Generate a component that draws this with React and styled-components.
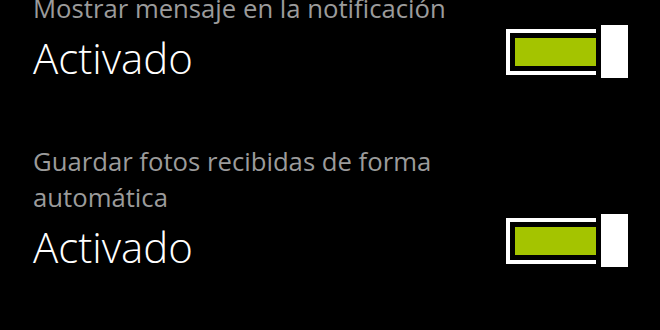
import React from 'react'
import styled, { createGlobalStyle } from 'styled-components'

const GlobalStyle = createGlobalStyle`
	html, body {
		margin: 0;
		padding: 0;
		background: #000;
		overflow: hidden;
	}
`

const Page = styled.div`
	width: 660px;
	height: 330px;
	background: #000;
	box-sizing: border-box;
	padding: 0 32px 0 33px;
	font-family: "Open Sans", "Noto Sans", sans-serif;
	display: flex;
	flex-direction: column;
	margin-top: -9px;
`

const Setting = styled.div`
	display: flex;
	flex-direction: column;
	margin-bottom: ${props => props.gap || 0}px;
`

const Label = styled.div`
	color: #9b9b9b;
	font-size: 25.7px;
	line-height: 36px;
	width: 440px;
`

const Row = styled.div`
	display: flex;
	align-items: flex-start;
	justify-content: space-between;
`

const Value = styled.div`
	color: #fff;
	font-size: 42px;
	font-weight: 300;
	line-height: 62px;
`

const Switch = styled.div`
	display: flex;
	align-items: center;
	margin-top: -2px;
`

const Track = styled.div`
	border: 4px solid #fff;
	border-right: none;
	padding: 5px 0 5px 5px;
`

const Fill = styled.div`
	width: 81px;
	height: 28px;
	background: #a4c400;
`

const Thumb = styled.div`
	width: 27px;
	height: 53px;
	margin-left: 5px;
	background: #fff;
`

const Toggle = () => (
	<Switch>
		<Track>
			<Fill />
		</Track>
		<Thumb />
	</Switch>
)

const settings = [
	{ label: 'Mostrar mensaje en la notificación', value: 'Activado' },
	{ label: 'Guardar fotos recibidas de forma automática', value: 'Activado' }
]

const App = () => (
	<Page>
		<GlobalStyle />
		{settings.map((s, i) => (
			<Setting key={i} gap={i === 0 ? 55 : 0}>
				<Label>{s.label}</Label>
				<Row>
					<Value>{s.value}</Value>
					<Toggle />
				</Row>
			</Setting>
		))}
	</Page>
)

export default App
